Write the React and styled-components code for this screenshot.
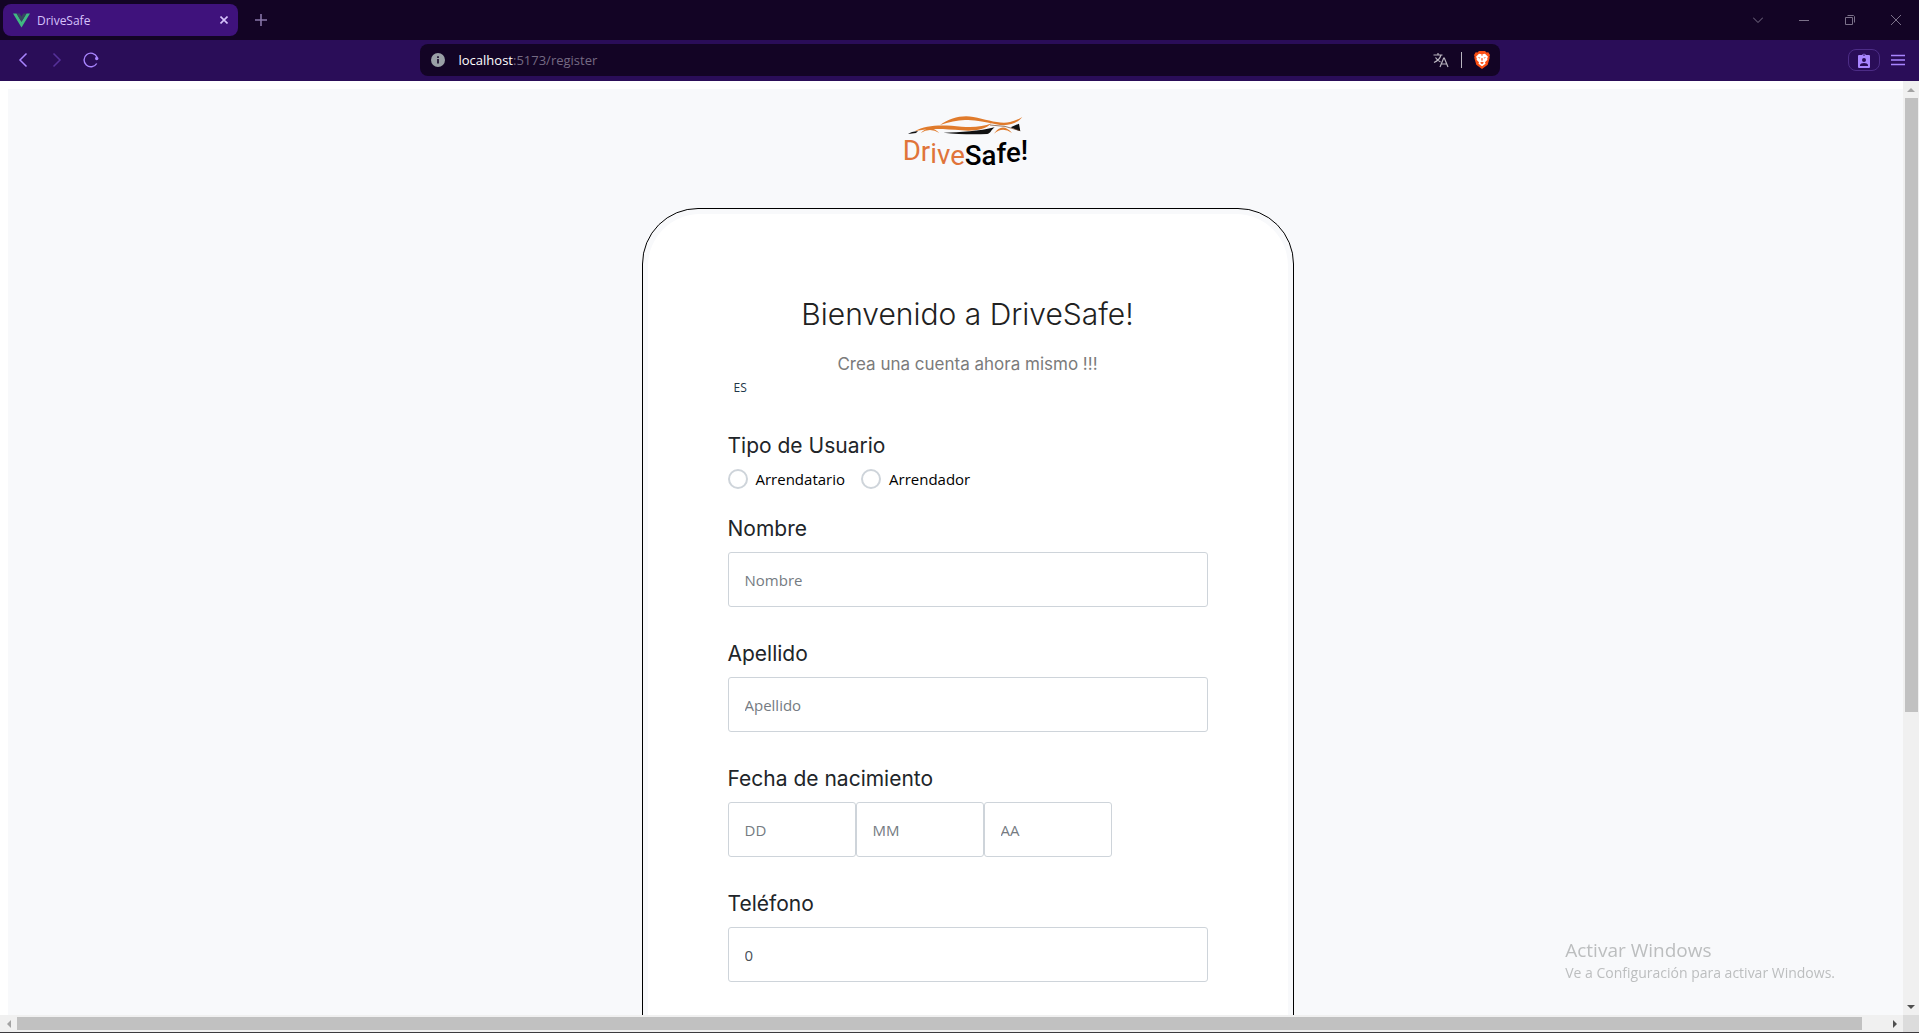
import React, { useState } from "react";
import styled, { createGlobalStyle } from "styled-components";

const uiFont = `"Open Sans", "Noto Sans", sans-serif`;
const brandFont = `Inter, "Open Sans", sans-serif`;

const GlobalStyle = createGlobalStyle`
  * { box-sizing: border-box; }
  body { margin: 0; overflow: hidden; font-family: ${uiFont}; background: #fff; }
  button, input { font: inherit; }
  button { border: 0; padding: 0; background: none; color: inherit; }
`;

const Browser = styled.div`
  height: 100vh;
  display: flex;
  flex-direction: column;
  border-bottom: 1px solid #3c3a3e;
`;

const TabBar = styled.div`
  flex: none;
  height: 40px;
  display: flex;
  align-items: center;
  justify-content: space-between;
  padding-left: 3px;
  background: #130425;
`;

const TabGroup = styled.div`
  display: flex;
  align-items: center;
  gap: 8px;
`;

const Tab = styled.div`
  width: 235px;
  height: 32px;
  display: flex;
  align-items: center;
  gap: 7px;
  padding: 0 8px 0 10px;
  border-radius: 8px;
  background: #3f127c;
  color: #d6c2fb;
  font-size: 12px;
`;

const TabTitle = styled.span`
  flex: 1;
`;

const IconButton = styled.button`
  width: ${(p) => p.$width || 30}px;
  height: 30px;
  display: grid;
  place-items: center;
  color: ${(p) => p.$color || "#a985ff"};
`;

const WindowControls = styled.div`
  display: flex;
`;

const Toolbar = styled.div`
  flex: none;
  height: 41px;
  display: grid;
  grid-template-columns: 1fr minmax(0, 1080px) 1fr;
  align-items: center;
  padding-bottom: 1px;
  background: #2a0d58;
`;

const NavGroup = styled.nav`
  display: flex;
  gap: 4px;
  padding-left: 8px;
`;

const AddressBar = styled.div`
  height: 32px;
  display: flex;
  align-items: center;
  gap: 12px;
  padding: 0 10px 0 11px;
  border-radius: 8px;
  background: #130425;
`;

const Address = styled.div`
  flex: 1;
  padding-left: 2px;
  color: #756a83;
  font-size: 13px;
`;

const Host = styled.span`
  color: #fff;
`;

const Divider = styled.span`
  width: 1px;
  height: 16px;
  background: #b9b4bf;
`;

const MenuGroup = styled.div`
  display: flex;
  align-items: center;
  justify-content: flex-end;
  gap: 3px;
  padding-right: 6px;
`;

const ProfileButton = styled.button`
  width: 32px;
  height: 22px;
  display: grid;
  place-items: center;
  border: 1px solid #4c2c86;
  border-radius: 8px;
  color: #a985ff;
`;

const Content = styled.div`
  flex: 1;
  min-height: 0;
  display: grid;
  grid-template-columns: minmax(0, 1fr) 16px;
  grid-template-rows: minmax(0, 1fr) 17px;
`;

const Viewport = styled.main`
  overflow: hidden;
  padding: 8px 0 0 8px;
  background: #fff;
`;

const Page = styled.div`
  width: 100vw;
  min-height: 1350px;
  display: flex;
  flex-direction: column;
  align-items: center;
  gap: 29px;
  padding-top: 26px;
  background: #f8f9fb;
`;

const Card = styled.section`
  width: 652px;
  min-height: 1200px;
  padding: 5px;
  border: 1px solid #000;
  border-radius: 56px;
  background: #f8f9fb;
`;

const CardBody = styled.div`
  min-height: 1188px;
  padding: 80px;
  border-radius: 52px;
  background: #fff;
`;

const Title = styled.h1`
  margin: 0 0 18px;
  color: #212121;
  font: 300 30px/40px ${brandFont};
  text-align: center;
`;

const Subtitle = styled.p`
  margin: 0 0 4px;
  color: #7b7b7b;
  font: 400 17px/24px ${brandFont};
  text-align: center;
`;

const LanguageButton = styled.button`
  display: block;
  margin-bottom: 35px;
  padding: 0 6px;
  color: #213547;
  font-size: 12px;
  line-height: 16px;
`;

const Form = styled.form`
  display: flex;
  flex-direction: column;
`;

const Field = styled.div`
  display: flex;
  flex-direction: column;
  gap: 8px;
  margin-bottom: 32px;
`;

const Group = styled.fieldset`
  min-width: 0;
  margin: 0 0 ${(p) => (p.$compact ? 24 : 32)}px;
  padding: 0;
  border: 0;
`;

const labelText = `
  color: #212529;
  font: 400 21px/30px ${brandFont};
`;

const Label = styled.label`
  ${labelText}
`;

const Legend = styled.legend`
  ${labelText}
  padding: 0;
  margin-bottom: 8px;
`;

const Options = styled.div`
  display: flex;
  gap: 16px;
`;

const Option = styled.label`
  display: flex;
  align-items: flex-start;
  gap: 8px;
  color: #000;
  font-size: 15px;
  line-height: 21px;
`;

const Radio = styled.input`
  appearance: none;
  width: 20px;
  height: 20px;
  margin: 0;
  border: 2px solid #ced4da;
  border-radius: 50%;
  background: #fff;
  &:checked { border: 6px solid #3f127c; }
`;

const Input = styled.input`
  width: ${(p) => p.$width || "100%"};
  height: 55px;
  padding: 0 16px;
  border: 1px solid #ced4da;
  border-radius: 3px;
  background: #fff;
  color: #495057;
  font-size: 15px;
  &::placeholder { color: #757b82; opacity: 1; }
`;

const DateRow = styled.div`
  display: flex;
`;

const VScroll = styled.div`
  display: flex;
  flex-direction: column;
  align-items: center;
  background: #f0f0f0;
`;

const HScroll = styled.div`
  display: flex;
  align-items: center;
  background: #f0f0f0;
`;

const ScrollArrow = styled.div`
  flex: none;
  width: 17px;
  height: 17px;
  display: grid;
  place-items: center;
  color: ${(p) => (p.$active ? "#505050" : "#a3a3a3")};
`;

const Track = styled.div`
  flex: 1;
  align-self: stretch;
  padding: ${(p) => (p.$vertical ? "0 1px 0 2px" : "2px 0")};
`;

const Thumb = styled.div`
  width: ${(p) => (p.$vertical ? "100%" : "98.7%")};
  height: ${(p) => (p.$vertical ? "68.2%" : "13px")};
  background: #c1c1c1;
`;

const Corner = styled.div`
  background: #dcdcdc;
`;

const Watermark = styled.aside`
  position: fixed;
  right: 84px;
  bottom: 49px;
  color: #bcbebf;
  font-size: 14px;
  line-height: 22px;
  pointer-events: none;
`;

const WatermarkTitle = styled.div`
  font-size: 19px;
  line-height: 24px;
`;

const Line = ({ d, size = 16, width = 1 }) => (
  <svg width={size} height={size} viewBox={`0 0 ${size} ${size}`} fill="none" stroke="currentColor" strokeWidth={width} aria-hidden="true">
    <path d={d} />
  </svg>
);

const Arrow = ({ points }) => (
  <svg width="8" height="8" viewBox="0 0 8 8" aria-hidden="true">
    <polygon points={points} fill="currentColor" />
  </svg>
);

const VueLogo = () => (
  <svg width="17" height="15" viewBox="0 0 17 15" aria-hidden="true">
    <path d="M0 .5h3.500l5 8.200 5-8.200H17L8.500 14.500z" fill="#41b883" />
    <path d="M3.500.5h3.200l1.800 3 1.800-3h3.200l-5 8.200z" fill="#35495e" />
  </svg>
);

const InfoIcon = () => (
  <svg width="14" height="14" viewBox="0 0 14 14" aria-hidden="true">
    <circle cx="7" cy="7" r="7" fill="#9aa0a6" />
    <path d="M7 6v4.500M7 3.300v1.600" stroke="#130425" strokeWidth="1.600" />
  </svg>
);

const TranslateIcon = () => (
  <svg width="16" height="16" viewBox="0 0 16 16" fill="none" stroke="#b9b4bf" strokeWidth="1.200" aria-hidden="true">
    <path d="M.5 3h9M5 1v2M8 3C7 6.500 4.500 9 1 10.500M2.500 5.500C4 8 5.500 9 7.500 10M7 15l3.700-9h.6l3.700 9M8.200 12h5.600" />
  </svg>
);

const BraveIcon = () => (
  <svg width="16" height="18" viewBox="0 0 16 18" aria-hidden="true">
    <path d="M5 0h6l1.500 1.500L14.300 1.300 16 4l-.6 1.500.3 1.300-2 7L8 18l-5.700-4.200-2-7 .3-1.300L0 4l1.700-2.700 1.800.2z" fill="#fb4f14" />
    <path d="M5 2.800l3 .5 3-.5 3 3-.8 1.400.2 1.500-2.400 2.600.5 1.500L8 15.300 4.500 12.800l.5-1.500L2.600 8.700l.2-1.500L2 5.800z" fill="#fff" />
    <path d="M3.700 6l2.700.7-.8.900zM12.300 6l-2.700.7.8.9zM7.200 7.200h1.600l-.3 2.600h-1zM6 11.800l2-1 2 1-2 1.400zM6.800 3.500L8 5l1.200-1.500z" fill="#fb4f14" />
  </svg>
);

const ProfileIcon = () => (
  <svg width="12" height="15" viewBox="0 0 12 15" aria-hidden="true">
    <path fillRule="evenodd" fill="currentColor" d="M1 2h3.200a1.900 1.900 0 0 1 3.600 0H11a1 1 0 0 1 1 1v11a1 1 0 0 1-1 1H1a1 1 0 0 1-1-1V3a1 1 0 0 1 1-1zm5-.7a.8.8 0 1 0 0 1.600.8.8 0 0 0 0-1.600zM6 5a2 2 0 1 0 0 4 2 2 0 0 0 0-4zm-4 8h8v-.8c0-3-8-3-8 0z" />
  </svg>
);

const ReloadIcon = () => (
  <svg width="16" height="16" viewBox="0 0 16 16" fill="none" stroke="currentColor" strokeWidth="1.400" aria-hidden="true">
    <path d="M13.700 11.500A6.800 6.800 0 1 1 14 5" />
    <circle cx="13.700" cy="6.500" r="1.700" fill="currentColor" stroke="none" />
  </svg>
);

const Logo = () => (
  <svg width="136" height="64" viewBox="30 30 408 192" role="img" aria-label="DriveSafe!">
    <g fill="#e07b2c">
      <path d="M150 60C180 40 215 29 250 36C290 43 330 59 360 51Q380 46 397 36C380 58 350 65 318 58C285 51 255 43 225 45Q190 46 150 60Z" />
      <path d="M74 79C110 58 160 60 215 65C250 68 280 65 305 55C285 75 250 79 215 76C160 71 115 69 74 79Z" />
      <path d="M92 84Q120 56 148 84Q120 66 92 84ZM312 86Q337 50 366 84Q337 64 312 86Z" />
    </g>
    <path d="M54 87Q63 80 84 78L78 84ZM160 83C210 82 270 79 314 67C303 74 304 84 292 87C250 89 205 88 160 83ZM362 67L387 56L391 79Q378 75 362 67Z" fill="#111" />
    <path d="M300 60Q345 60 390 77" fill="none" stroke="#6b3b1c" strokeWidth="2" />
    <text x="38" y="164" dy="0 5 4 4 3 1 -2 -4 -5 -4" fontFamily="Roboto, sans-serif" fontSize="83" fill="#e0743a">
      Drive<tspan fill="#000" fontWeight="500">Safe!</tspan>
    </text>
  </svg>
);

const TextField = ({ id, label, ...rest }) => (
  <Field>
    <Label htmlFor={id}>{label}</Label>
    <Input id={id} {...rest} />
  </Field>
);

const userTypes = ["Arrendatario", "Arrendador"];
const dateParts = [
  ["DD", "Día"],
  ["MM", "Mes"],
  ["AA", "Año"],
];

export default function App() {
  const [type, setType] = useState("");
  return (
    <>
      <GlobalStyle />
      <Browser>
        <TabBar>
          <TabGroup>
            <Tab>
              <VueLogo />
              <TabTitle>DriveSafe</TabTitle>
              <IconButton aria-label="Cerrar pestaña" $width={12} $color="#d6c2fb">
                <Line size={8} width={1.6} d="M.5.5l7 7M7.500.5l-7 7" />
              </IconButton>
            </Tab>
            <IconButton aria-label="Nueva pestaña" $color="#8876a8">
              <Line size={12} width={1.6} d="M6 0v12M0 6h12" />
            </IconButton>
          </TabGroup>
          <WindowControls>
            <IconButton aria-label="Buscar pestañas" $width={46} $color="#7b7189">
              <Line size={10} d="M0 2.500l5 5 5-5" />
            </IconButton>
            <IconButton aria-label="Minimizar" $width={46} $color="#7b7189">
              <Line size={10} d="M0 5.500h10" />
            </IconButton>
            <IconButton aria-label="Restaurar" $width={46} $color="#7b7189">
              <Line size={10} d="M.5 2.500h7v7h-7zM2.500.5h6l1 1v6" />
            </IconButton>
            <IconButton aria-label="Cerrar" $width={46} $color="#7b7189">
              <Line size={10} d="M0 0l10 10M10 0L0 10" />
            </IconButton>
          </WindowControls>
        </TabBar>
        <Toolbar>
          <NavGroup>
            <IconButton aria-label="Atrás">
              <Line width={1.5} d="M11.500 1.500L5 8l6.500 6.500" />
            </IconButton>
            <IconButton aria-label="Adelante" $color="#56319a">
              <Line width={1.5} d="M4.500 1.500L11 8l-6.500 6.500" />
            </IconButton>
            <IconButton aria-label="Recargar">
              <ReloadIcon />
            </IconButton>
          </NavGroup>
          <AddressBar>
            <InfoIcon />
            <Address>
              <Host>localhost</Host>:5173/register
            </Address>
            <TranslateIcon />
            <Divider />
            <BraveIcon />
          </AddressBar>
          <MenuGroup>
            <ProfileButton aria-label="Perfil">
              <ProfileIcon />
            </ProfileButton>
            <IconButton aria-label="Menú">
              <Line size={14} width={1.4} d="M0 2.500h14M0 7h14M0 11.500h14" />
            </IconButton>
          </MenuGroup>
        </Toolbar>
        <Content>
          <Viewport>
            <Page>
              <Logo />
              <Card>
                <CardBody>
                  <Title>Bienvenido a DriveSafe!</Title>
                  <Subtitle>Crea una cuenta ahora mismo !!!</Subtitle>
                  <LanguageButton type="button">ES</LanguageButton>
                  <Form>
                    <Group $compact>
                      <Legend>Tipo de Usuario</Legend>
                      <Options>
                        {userTypes.map((name) => (
                          <Option key={name}>
                            <Radio type="radio" name="type" value={name} checked={type === name} onChange={() => setType(name)} />
                            {name}
                          </Option>
                        ))}
                      </Options>
                    </Group>
                    <TextField id="nombre" label="Nombre" placeholder="Nombre" />
                    <TextField id="apellido" label="Apellido" placeholder="Apellido" />
                    <Group>
                      <Legend>Fecha de nacimiento</Legend>
                      <DateRow>
                        {dateParts.map(([hint, name]) => (
                          <Input key={hint} $width="128px" placeholder={hint} aria-label={name} />
                        ))}
                      </DateRow>
                    </Group>
                    <TextField id="telefono" label="Teléfono" defaultValue="0" />
                  </Form>
                </CardBody>
              </Card>
            </Page>
          </Viewport>
          <VScroll>
            <ScrollArrow><Arrow points="0,6 4,2 8,6" /></ScrollArrow>
            <Track $vertical><Thumb $vertical /></Track>
            <ScrollArrow $active><Arrow points="0,2 4,6 8,2" /></ScrollArrow>
          </VScroll>
          <HScroll>
            <ScrollArrow><Arrow points="6,0 2,4 6,8" /></ScrollArrow>
            <Track><Thumb /></Track>
            <ScrollArrow $active><Arrow points="2,0 6,4 2,8" /></ScrollArrow>
          </HScroll>
          <Corner />
        </Content>
      </Browser>
      <Watermark>
        <WatermarkTitle>Activar Windows</WatermarkTitle>
        Ve a Configuración para activar Windows.
      </Watermark>
    </>
  );
}
